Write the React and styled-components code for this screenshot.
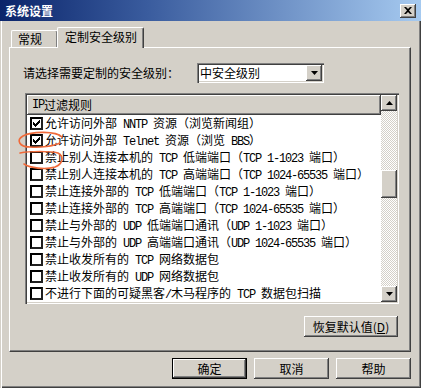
import React from "react";
import styled, { createGlobalStyle } from "styled-components";

const FACE = "#D4D0C8";

const GlobalStyle = createGlobalStyle`
  html, body { margin: 0; padding: 0; background: ${FACE}; }
  body {
    font-family: "Noto Sans CJK SC", "Noto Sans", sans-serif;
    font-size: 12px;
    color: #000;
  }
  * { box-sizing: border-box; }
`;

const raised = `
  background: ${FACE};
  box-shadow: inset -1px -1px #404040, inset 1px 1px #fff, inset -2px -2px #808080;
`;

const sunken = `
  box-shadow: inset 1px 1px #808080, inset 2px 2px #404040, inset -1px -1px #fff, inset -2px -2px ${FACE};
`;

const Window = styled.div`
  position: relative;
  width: 421px;
  height: 388px;
  background: ${FACE};
  display: flex;
  flex-direction: column;
  overflow: hidden;
  box-shadow: inset 1px 0 ${FACE}, inset 2px 0 #fff, inset -1px -1px #404040, inset -2px -2px #808080;
`;

const TitleBar = styled.div`
  height: 21px;
  flex: none;
  display: flex;
  align-items: center;
  justify-content: space-between;
  padding: 0 5px 0 5px;
  background: linear-gradient(to right, #0A246A 0%, #3A5C9E 35%, #A6CAF0 100%);
`;

const Title = styled.span`
  color: #fff;
  font-weight: bold;
  font-size: 12px;
  line-height: 12px;
`;

const CloseButton = styled.div`
  width: 16px;
  height: 14px;
  ${raised}
  display: flex;
  align-items: center;
  justify-content: center;
`;

const Body = styled.div`
  flex: 1;
  display: flex;
  flex-direction: column;
  padding: 6px 10px 0 9px;
`;

const Tabs = styled.div`
  display: flex;
  align-items: flex-end;
  height: 20px;
  padding-left: 2px;
`;

const Tab = styled.div`
  position: relative;
  z-index: ${(p) => (p.$active ? 1 : 0)};
  width: ${(p) => p.$w}px;
  height: ${(p) => (p.$active ? 21 : 17)}px;
  margin-left: ${(p) => (p.$active ? -1 : 0)}px;
  margin-bottom: ${(p) => (p.$active ? -1 : 0)}px;
  background: ${FACE};
  border-top: 1px solid #fff;
  border-left: 1px solid #fff;
  border-right: 1px solid #404040;
  border-radius: 2px 2px 0 0;
  box-shadow: inset -1px 0 #808080;
  padding: ${(p) => (p.$active ? "3px 0 0 7px" : "2px 0 0 6px")};
  line-height: 12px;
  white-space: nowrap;
`;

const Panel = styled.div`
  height: 305px;
  flex: none;
  display: flex;
  flex-direction: column;
  border: 1px solid;
  border-color: #fff #404040 #404040 #fff;
  box-shadow: inset -1px -1px #808080;
  padding-top: 15px;
`;

const LevelRow = styled.div`
  display: flex;
  align-items: center;
  height: 20px;
  padding-left: 13px;
  gap: 18px;
`;

const Label = styled.span`
  line-height: 12px;
  white-space: nowrap;
`;

const Select = styled.div`
  width: 127px;
  height: 20px;
  background: #fff;
  ${sunken}
  display: flex;
  align-items: center;
  padding: 2px;
`;

const SelectText = styled.span`
  flex: 1;
  padding-left: 1px;
  line-height: 12px;
`;

const ArrowButton = styled.div`
  width: 16px;
  height: 16px;
  flex: none;
  ${raised}
  display: flex;
  align-items: center;
  justify-content: center;
`;

const ListBox = styled.div`
  margin: 10px 0 0 15px;
  width: 374px;
  height: 211px;
  background: #fff;
  ${sunken}
  display: flex;
  padding: 2px;
`;

const ListMain = styled.div`
  flex: 1;
  display: flex;
  flex-direction: column;
  overflow: hidden;
`;

const Header = styled.div`
  height: 20px;
  flex: none;
  ${raised}
  display: flex;
  align-items: center;
  padding-left: 5px;
  line-height: 12px;
`;

const Row = styled.div`
  height: 17px;
  flex: none;
  display: flex;
  align-items: center;
  padding-left: 3px;
  gap: 2px;
  white-space: nowrap;
  line-height: 12px;
`;

const Check = styled.div`
  width: 13px;
  height: 13px;
  flex: none;
  background: #fff;
  border: 2px solid #000;
  border-right-color: #202020;
  border-bottom-color: #202020;
  display: flex;
  align-items: center;
  justify-content: center;
`;

const Latin = styled.span`
  font-family: "Liberation Mono", monospace;
  font-size: 12px;
  letter-spacing: -1.2px;
  white-space: pre;
`;

const ScrollBar = styled.div`
  width: 16px;
  flex: none;
  display: flex;
  flex-direction: column;
`;

const Track = styled.div`
  flex: 1;
  background: repeating-conic-gradient(#fff 0 25%, ${FACE} 0 50%) 0 0 / 2px 2px;
  padding-top: ${(p) => p.$offset}px;
`;

const Thumb = styled.div`
  height: ${(p) => p.$h}px;
  ${raised}
`;

const RestoreRow = styled.div`
  display: flex;
  justify-content: flex-end;
  padding-right: 12px;
  margin-top: 12px;
`;

const Button = styled.div`
  width: ${(p) => p.$w}px;
  height: 21px;
  ${raised}
  ${(p) => (p.$default ? `border: 1px solid #000;` : "")}
  display: flex;
  align-items: center;
  justify-content: center;
  line-height: 12px;
`;

const Footer = styled.div`
  display: flex;
  justify-content: flex-end;
  gap: 7px;
  margin-top: 6px;
`;

const Overlay = styled.svg`
  position: absolute;
  left: 0;
  top: 0;
  pointer-events: none;
`;

const runs = (s) =>
  s
    .split(/([\x20-\x7e]+)/)
    .filter(Boolean)
    .map((part, i) =>
      /^[\x20-\x7e]+$/.test(part) ? <Latin key={i}>{part}</Latin> : <React.Fragment key={i}>{part}</React.Fragment>
    );

const rules = [
  ["允许访问外部 NNTP 资源（浏览新闻组）", true],
  ["允许访问外部 Telnet 资源（浏览 BBS）", true],
  ["禁止别人连接本机的 TCP 低端端口（TCP 1-1023 端口）", false],
  ["禁止别人连接本机的 TCP 高端端口（TCP 1024-65535 端口）", false],
  ["禁止连接外部的 TCP 低端端口（TCP 1-1023 端口）", false],
  ["禁止连接外部的 TCP 高端端口（TCP 1024-65535 端口）", false],
  ["禁止与外部的 UDP 低端端口通讯（UDP 1-1023 端口）", false],
  ["禁止与外部的 UDP 高端端口通讯（UDP 1024-65535 端口）", false],
  ["禁止收发所有的 TCP 网络数据包", false],
  ["禁止收发所有的 UDP 网络数据包", false],
  ["不进行下面的可疑黑客/木马程序的 TCP 数据包扫描", false],
];

const CheckMark = () => (
  <svg width="7" height="7" viewBox="0 0 7 7">
    <path d="M0 2h1v1h1v1h1V3h1V2h1V1h1V0h1v3H6v1H5v1H4v1H3v1H2V6H1V5H0z" fill="#000" />
  </svg>
);

const Down = () => (
  <svg width="7" height="4" viewBox="0 0 7 4">
    <path d="M0 0h7L3.5 4z" fill="#000" />
  </svg>
);

const Up = () => (
  <svg width="7" height="4" viewBox="0 0 7 4">
    <path d="M0 4h7L3.5 0z" fill="#000" />
  </svg>
);

export default function App() {
  return (
    <>
      <GlobalStyle />
      <Window>
        <TitleBar>
          <Title>系统设置</Title>
          <CloseButton>
            <svg width="8" height="7" viewBox="0 0 8 7">
              <path d="M0 0h2l2 2 2-2h2L5 3.5 8 7H6L4 5 2 7H0l3-3.5z" fill="#000" />
            </svg>
          </CloseButton>
        </TitleBar>
        <Body>
          <Tabs>
            <Tab $w={47}>常规</Tab>
            <Tab $w={87} $active>定制安全级别</Tab>
          </Tabs>
          <Panel>
            <LevelRow>
              <Label>请选择需要定制的安全级别：</Label>
              <Select>
                <SelectText>中安全级别</SelectText>
                <ArrowButton><Down /></ArrowButton>
              </Select>
            </LevelRow>
            <ListBox>
              <ListMain>
                <Header>{runs("IP过滤规则")}</Header>
                {rules.map(([t, c], i) => (
                  <Row key={i}>
                    <Check>{c && <CheckMark />}</Check>
                    <span>{runs(t)}</span>
                  </Row>
                ))}
              </ListMain>
              <ScrollBar>
                <ArrowButton><Up /></ArrowButton>
                <Track $offset={59}>
                  <Thumb $h={28} />
                </Track>
                <ArrowButton><Down /></ArrowButton>
              </ScrollBar>
            </ListBox>
            <RestoreRow>
              <Button $w={94}>恢复默认值(<u>D</u>)</Button>
            </RestoreRow>
          </Panel>
          <Footer>
            <Button $w={75} $default>确定</Button>
            <Button $w={75}>取消</Button>
            <Button $w={75}>帮助</Button>
          </Footer>
        </Body>
        <Overlay width="421" height="388" viewBox="0 0 421 388">
          <path d="M62 137 C56 131 32 131 23 136 C16 140 19 147 30 147 C40 148 54 146 60 143" fill="none" stroke="#F06A3A" strokeWidth="1.6" strokeLinecap="round" />
          <path d="M20 153 C30 151 50 151 58 153 C64 156 63 164 55 167 C45 170 30 168 24 164" fill="none" stroke="#F06A3A" strokeWidth="1.6" strokeLinecap="round" />
        </Overlay>
      </Window>
    </>
  );
}
